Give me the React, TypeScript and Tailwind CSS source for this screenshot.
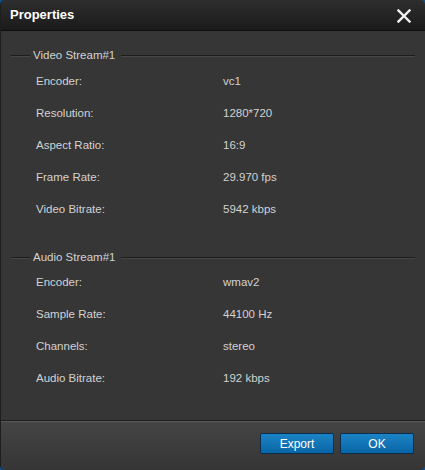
import React from "react";

const video = [
  ["Encoder:", "vc1"],
  ["Resolution:", "1280*720"],
  ["Aspect Ratio:", "16:9"],
  ["Frame Rate:", "29.970 fps"],
  ["Video Bitrate:", "5942 kbps"],
];
const audio = [
  ["Encoder:", "wmav2"],
  ["Sample Rate:", "44100 Hz"],
  ["Channels:", "stereo"],
  ["Audio Bitrate:", "192 kbps"],
];

function Group({ title }: { title: string }) {
  return (
    <div className="flex h-[20px] items-center pl-[10px] pr-[10px]">
      <div className="h-[2px] w-[19px] border-b border-[#474747] bg-[#1c1c1c]" />
      <span className="px-[3px] text-[11.5px] leading-none text-[#d2d2d2]">{title}</span>
      <div className="ml-[3px] h-[2px] flex-1 border-b border-[#474747] bg-[#1c1c1c]" />
    </div>
  );
}

function Row({ label, value }: { label: string; value: string }) {
  return (
    <div className="flex h-[32px] items-center text-[11.5px] text-[#d2d2d2]">
      <span className="w-[187px] pl-[35px] box-content">{label}</span>
      <span>{value}</span>
    </div>
  );
}

export default function App() {
  return (
    <div
      className="h-[470px] w-[425px] bg-[#0d4f94]"
      style={{ fontFamily: '"Liberation Sans", Arial, sans-serif' }}
    >
      <div className="flex h-full w-full flex-col overflow-hidden rounded-[5px] border-l border-[#1e1e1e] bg-[#363636]">
        <div className="flex h-[31px] shrink-0 items-center justify-between border-b border-[#0f0f0f] bg-gradient-to-b from-[#2e2e2e] to-[#1b1b1b] pl-[9px] pr-[14px]">
          <span className="text-[13px] font-bold text-white">Properties</span>
          <svg width="14" height="14" viewBox="0 0 14 14" className="mt-[1px]">
            <path d="M1.5 1.5 L12.5 12.5 M12.5 1.5 L1.5 12.5" stroke="#f2f2f2" strokeWidth="2.4" strokeLinecap="square" />
          </svg>
        </div>
        <div className="flex-1 bg-[#363636] pt-[15px]">
          <Group title="Video Stream#1" />
          {video.map(([l, v]) => (
            <Row key={l + v} label={l} value={v} />
          ))}
          <div className="h-[22px]" />
          <Group title="Audio Stream#1" />
          <div className="-mt-[1px]">
            {audio.map(([l, v]) => (
              <Row key={l + v} label={l} value={v} />
            ))}
          </div>
        </div>
        <div className="flex h-[50px] shrink-0 items-start justify-end gap-[6px] border-t border-[#1c1c1c] bg-gradient-to-b from-[#454545] to-[#353535] pr-[11px] pt-[12px] shadow-[inset_0_1px_0_#5a5a5a]">
          <button className="h-[21px] w-[74px] rounded-[2px] border border-[#0b2d4d] bg-gradient-to-b from-[#1b84c6] to-[#0966a6] text-[12px] text-white">
            Export
          </button>
          <button className="h-[21px] w-[74px] rounded-[2px] border border-[#0b2d4d] bg-gradient-to-b from-[#1b84c6] to-[#0966a6] text-[12px] text-white">
            OK
          </button>
        </div>
      </div>
    </div>
  );
}
